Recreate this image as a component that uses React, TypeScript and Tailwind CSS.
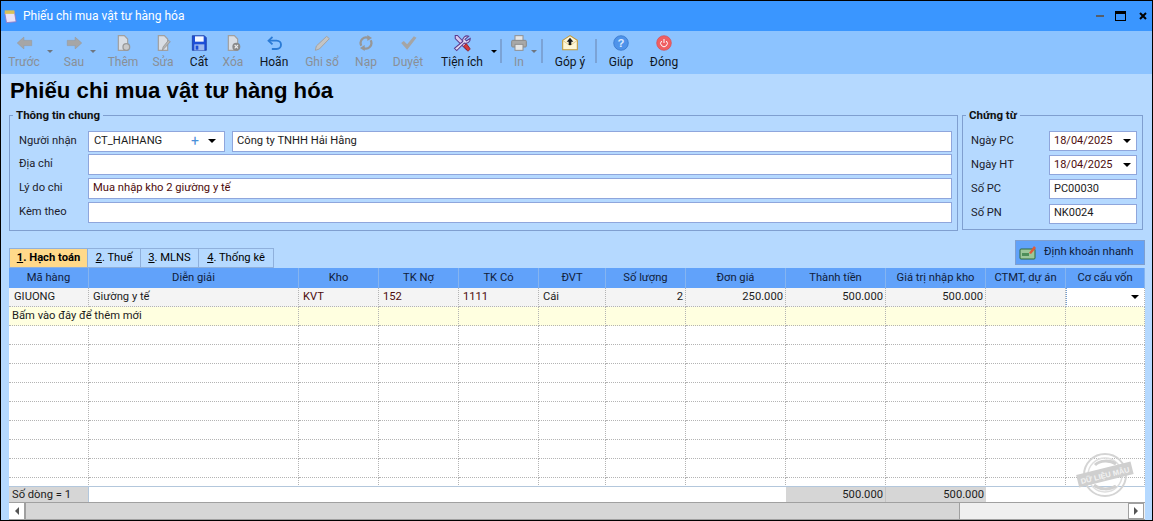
import type { ReactNode } from "react";

const GRAY = "#a6a6a6";

const IconBack = () => (
  <svg width="17" height="16" viewBox="0 0 26 24"><path d="M2 12 L12 3 V8 H24 V16 H12 V21 Z" fill={GRAY} stroke="#999" /></svg>
);
const IconNext = () => (
  <svg width="17" height="16" viewBox="0 0 26 24"><path d="M24 12 L14 3 V8 H2 V16 H14 V21 Z" fill={GRAY} stroke="#999" /></svg>
);
const Doc = () => (
  <path d="M5 1 H14 L19 6 V23 H5 Z" fill="#d8dde4" stroke="#a0a0a0" strokeWidth="1.800" />
);
const IconAdd = () => (
  <svg width="16" height="16" viewBox="0 0 24 24"><Doc /><circle cx="17" cy="18" r="5" fill="#c9c9c9" stroke="#999" strokeWidth="2" /></svg>
);
const IconEdit = () => (
  <svg width="16" height="16" viewBox="0 0 24 24"><Doc /><path d="M23 10 L14 20 L11 23 L12 18 L20 8 Z" fill="#b5b5b5" stroke="#8f8f8f" /></svg>
);
const IconSave = () => (
  <svg width="16" height="16" viewBox="0 0 24 24">
    <path d="M2 1 H20 L23 4 V23 H2 Z" fill="#1d4fd8" stroke="#14309a" />
    <rect x="6" y="2" width="13" height="8" fill="#f4f7ff" />
    <rect x="5" y="14" width="15" height="9" fill="#9db9ee" />
    <rect x="7" y="16" width="4" height="6" fill="#1d4fd8" />
  </svg>
);
const IconDelete = () => (
  <svg width="16" height="16" viewBox="0 0 24 24"><Doc /><circle cx="17" cy="17.500" r="6" fill="#8a8a8a" /><path d="M14.500 15 L19.500 20 M19.500 15 L14.500 20" stroke="#eee" strokeWidth="1.600" /></svg>
);
const IconUndo = () => (
  <svg width="17" height="16" viewBox="0 0 24 24" fill="none"><path d="M9 3 L3 8.500 L9 14" stroke="#2b7bd6" strokeWidth="2.600" /><path d="M4 8.500 H15 C24 8.500 24 21 15 21 H8" stroke="#2b7bd6" strokeWidth="2.800" /></svg>
);
const IconPencil = () => (
  <svg width="16" height="16" viewBox="0 0 24 24"><path d="M19 2 L23 5.500 L8 21 L2 23 L3.500 16.500 Z" fill="#c4c4c4" stroke="#a3a3a3" strokeWidth="1.500" /></svg>
);
const IconReload = () => (
  <svg width="16" height="16" viewBox="0 0 24 24" fill="none" stroke="#979797" strokeWidth="3.400">
    <path d="M5 16 C1 8 9 1 16 4.500" /><path d="M19 8 C23 16 15 23 8 19.500" />
    <path d="M14 0 L21 4.500 L14 9 Z M10 15 L3 19.500 L10 24 Z" fill="#979797" stroke="none" />
  </svg>
);
const IconCheck = () => (
  <svg width="17" height="16" viewBox="0 0 24 24"><path d="M1 12 L5 9 L10 14 L20 2 L24 4 L10 22 Z" fill="#a5a5a5" /></svg>
);
const IconTools = () => (
  <svg width="18" height="18" viewBox="0 0 24 24">
    <path d="M3 2 L6 2 L21 18 L18 21 L3 6 Z" fill="#d9c8ef" stroke="#5b3a8e" strokeWidth="1.400" />
    <path d="M21 3 A6 6 0 0 0 13 10 L2 19 L5 22 L15 12 A6 6 0 0 0 23 6 L18 9 L16 7 Z" fill="#e4dcf4" stroke="#5b3a8e" strokeWidth="1.400" />
    <path d="M14 16 L18 13 L23 20 L20 23 Z" fill="#d5383c" stroke="#8e1d21" />
  </svg>
);
const IconPrint = () => (
  <svg width="16" height="16" viewBox="0 0 24 24">
    <rect x="6" y="1" width="12" height="8" fill="#e6e6e6" stroke="#8f8f8f" strokeWidth="1.500" />
    <rect x="1" y="8" width="22" height="10" rx="1.500" fill="#a8a8a8" stroke="#8a8a8a" strokeWidth="1.500" />
    <rect x="6" y="14" width="12" height="9" fill="#e6e6e6" stroke="#8f8f8f" strokeWidth="1.500" />
  </svg>
);
const IconMail = () => (
  <svg width="16" height="16" viewBox="0 0 24 24">
    <path d="M1 8 L12 1 L23 8 V22 H1 Z" fill="#fdf6d8" stroke="#c49a3a" strokeWidth="1.600" />
    <path d="M1 8 L12 16 L23 8" fill="none" stroke="#d9b96a" />
    <path d="M12 4 L17 10 H14 V15 H10 V10 H7 Z" fill="#1c1c1c" />
  </svg>
);
const IconHelp = () => (
  <svg width="16" height="16" viewBox="0 0 24 24">
    <circle cx="12" cy="12" r="11" fill="#4f93ea" stroke="#2f6fc4" />
    <text x="12" y="18" textAnchor="middle" fontSize="17" fontWeight="700" fill="#dbeafe" fontFamily="Liberation Sans, sans-serif">?</text>
  </svg>
);
const IconPower = () => (
  <svg width="16" height="16" viewBox="0 0 24 24" fill="none">
    <circle cx="12" cy="12" r="11" fill="#ef5f62" stroke="#d64a4e" />
    <path d="M8.500 9 A5 5 0 1 0 15.500 9" stroke="#fff" strokeWidth="1.500" />
    <path d="M12 6 V12" stroke="#fff" strokeWidth="1.500" />
  </svg>
);

const Caret = ({ className = "" }: { className?: string }) => (
  <span className={`inline-block w-0 h-0 border-x-[4px] border-x-transparent border-t-[4px] ${className}`} />
);

type ToolProps = { label: string; icon: ReactNode; off?: boolean; w: string; caret?: string };

function Tool({ label, icon, off, w, caret }: ToolProps) {
  return (
    <div className={`relative flex flex-col items-center shrink-0 ${w}`}>
      <div className="h-[20px] mt-[2px] flex items-center justify-center">{icon}</div>
      <span className={`mt-[2px] leading-[14px] whitespace-nowrap ${off ? "text-[#8a8f96]" : "text-[#10151c]"}`}>{label}</span>
      {caret && <span className={`absolute top-[19px] w-0 h-0 border-x-[3px] border-x-transparent border-t-[3px] ${caret}`} />}
    </div>
  );
}

const Sep = ({ className = "" }: { className?: string }) => (
  <div className={`w-[2px] h-[24px] mt-[8px] bg-[#7ba3d6] shrink-0 ${className}`} />
);

function Toolbar() {
  return (
    <div className="h-[43px] bg-[#8cc3ff] flex pl-[3px] shrink-0 text-[12px]">
      <Tool w="w-[40px]" label="Trước" off icon={<IconBack />} caret="-right-[9px] border-t-[#6e7680]" />
      <Tool w="w-[40px] ml-[10px]" label="Sau" off icon={<IconNext />} caret="-right-[2px] border-t-[#6e7680]" />
      <Tool w="w-[40px] ml-[9px]" label="Thêm" off icon={<IconAdd />} />
      <Tool w="w-[40px]" label="Sửa" off icon={<IconEdit />} />
      <Tool w="w-[32px]" label="Cất" icon={<IconSave />} />
      <Tool w="w-[36px]" label="Xóa" off icon={<IconDelete />} />
      <Tool w="w-[46px]" label="Hoãn" icon={<IconUndo />} />
      <Tool w="w-[50px]" label="Ghi sổ" off icon={<IconPencil />} />
      <Tool w="w-[38px]" label="Nạp" off icon={<IconReload />} />
      <Tool w="w-[46px]" label="Duyệt" off icon={<IconCheck />} />
      <Tool w="w-[62px]" label="Tiện ích" icon={<IconTools />} caret="-right-[4px] border-t-black" />
      <Sep className="ml-[7px]" />
      <Tool w="w-[28px] ml-[3px]" label="In" off icon={<IconPrint />} caret="-right-[4px] border-t-[#6e7680]" />
      <Sep className="ml-[8px]" />
      <Tool w="w-[46px] ml-[4px]" label="Góp ý" icon={<IconMail />} />
      <Sep className="ml-[2px]" />
      <Tool w="w-[42px] ml-[3px]" label="Giúp" icon={<IconHelp />} />
      <Tool w="w-[42px] ml-[1px]" label="Đóng" icon={<IconPower />} />
    </div>
  );
}

const inputCls = "bg-white border border-[#8fa6dc] h-[21px] flex items-center px-[4px] text-[#1c1c1c] whitespace-nowrap shrink-0";
const maroon = "text-[#4d0c0c]";

function Field({ label, h = "h-[24px]", children }: { label: string; h?: string; children?: ReactNode }) {
  return (
    <div className={`flex items-center ${h}`}>
      <span className="w-[70px] pl-[1px] shrink-0 text-[#1c1c2c]">{label}</span>
      {children}
    </div>
  );
}

function GeneralInfo() {
  return (
    <fieldset className="w-[949px] h-[123px] border border-[#7f9fd0] ml-[8px] pl-[8px] pr-[5px] pt-[8px] shrink-0 min-w-0">
      <legend className="-ml-[5px] px-[3px] font-bold text-[11.500px] leading-[14px] text-[#111]">Thông tin chung</legend>
      <Field label="Người nhận" h="h-[22px]">
        <div className={`${inputCls} w-[137px] pl-[5px] pr-[8px]`}>
          <span>CT_HAIHANG</span>
          <span className="ml-auto text-[#4a90d9] text-[14px] leading-none">+</span>
          <Caret className="ml-[9px] border-t-black" />
        </div>
        <div className={`${inputCls} w-[720px] ml-[7px]`}>Công ty TNHH Hải Hằng</div>
      </Field>
      <Field label="Địa chỉ"><div className={`${inputCls} w-[864px]`} /></Field>
      <Field label="Lý do chi"><div className={`${inputCls} w-[864px] ${maroon}`}>Mua nhập kho 2 giường y tế</div></Field>
      <Field label="Kèm theo"><div className={`${inputCls} w-[864px]`} /></Field>
    </fieldset>
  );
}

function Voucher() {
  const rows: { label: string; value: string; pick: boolean; h: string }[] = [
    { label: "Ngày PC", value: "18/04/2025", pick: true, h: "h-[24px]" },
    { label: "Ngày HT", value: "18/04/2025", pick: true, h: "h-[24px]" },
    { label: "Số PC", value: "PC00030", pick: false, h: "h-[24px]" },
    { label: "Số PN", value: "NK0024", pick: false, h: "h-[25px]" },
  ];
  return (
    <fieldset className="w-[181px] h-[122px] border border-[#7f9fd0] ml-[4px] pl-[8px] pr-[5px] pt-[7px] shrink-0 min-w-0">
      <legend className="-ml-[5px] px-[3px] font-bold text-[11.500px] leading-[14px] text-[#111]">Chứng từ</legend>
      {rows.map((r) => (
        <div key={r.label} className={`flex items-center ${r.h}`}>
          <span className="w-[78px] shrink-0 text-[#1c1c2c]">{r.label}</span>
          <div className={`${inputCls} w-[88px] !h-[20px] text-[11px] ${r.pick ? maroon : ""}`}>
            <span>{r.value}</span>
            {r.pick && <Caret className="ml-auto mr-[1px] border-t-black" />}
          </div>
        </div>
      ))}
    </fieldset>
  );
}

const gridCols = "grid grid-cols-[80px_210px_80px_80px_80px_67px_80px_100px_100px_100px_80px_79px]";

const headers = ["Mã hàng", "Diễn giải", "Kho", "TK Nợ", "TK Có", "ĐVT", "Số lượng", "Đơn giá", "Thành tiền", "Giá trị nhập kho", "CTMT, dự án", "Cơ cấu vốn"];

const cellCls = "h-[19px] border-r border-b border-dotted border-[#b4b4b4] px-[4px] flex items-center whitespace-nowrap overflow-hidden";

function DataRow() {
  const right = ["2", "250.000", "500.000", "500.000", ""];
  return (
    <div className={`${gridCols} bg-[#f4f4f4]`}>
      <div className={`${cellCls} !pl-[5px]`}>GIUONG</div>
      <div className={cellCls}>Giường y tế</div>
      <div className={`${cellCls} ${maroon}`}>KVT</div>
      <div className={`${cellCls} ${maroon}`}>152</div>
      <div className={`${cellCls} ${maroon}`}>1111</div>
      <div className={cellCls}>Cái</div>
      {right.map((t, i) => <div key={i} className={`${cellCls} justify-end !pr-[2px]`}>{t}</div>)}
      <div className={`${cellCls} bg-white justify-end !pr-[5px] border-l border-l-[#6f9fd8]`}><Caret className="border-t-black" /></div>
    </div>
  );
}

function AddRow() {
  return (
    <div className={`${gridCols} bg-[#ffffe0]`}>
      <div className={`${cellCls} col-span-2 !px-[3px]`}>Bấm vào đây để thêm mới</div>
      {Array.from({ length: 10 }).map((_, i) => <div key={i} className={cellCls} />)}
    </div>
  );
}

function Grid() {
  return (
    <div className="ml-[8px] mr-[7px] relative text-[#1c1c1c]">
      <div className={`${gridCols} h-[20px] bg-[#61a2fa] text-[#10203a]`}>
        {headers.map((h) => (
          <div key={h} className="border-r border-[#85b4f0] flex items-center justify-center whitespace-nowrap">{h}</div>
        ))}
      </div>
      <div className="h-[198px] bg-white overflow-hidden">
        <DataRow />
        <AddRow />
        {Array.from({ length: 9 }).map((_, r) => (
          <div key={r} className={gridCols}>
            {Array.from({ length: 12 }).map((_, i) => <div key={i} className={cellCls} />)}
          </div>
        ))}
      </div>
      <div className={`${gridCols} h-[16px] border-t border-[#b3c7dc] bg-white`}>
        <div className="bg-[#d6d6d6] border-r border-[#b3c7dc] pl-[3px] leading-[15px]">Số dòng = 1</div>
        <div className="col-span-7" />
        <div className="bg-[#d6d6d6] border-r border-[#c4c4c4] text-right pr-[2px] leading-[15px]">500.000</div>
        <div className="bg-[#d6d6d6] text-right pr-[2px] leading-[15px]">500.000</div>
      </div>
      <div className="h-[18px] flex border-y border-[#a0a0a0] bg-[#f0f0f0]">
        <div className="w-[17px] bg-white border-r-2 border-[#a0a0a0] flex items-center justify-center">
          <span className="w-0 h-0 border-y-[4px] border-y-transparent border-r-[4px] border-r-[#555]" />
        </div>
        <div className="w-[934px] bg-[#d6d6d6] border-r border-[#a0a0a0]" />
        <div className="flex-1" />
        <div className="w-[16px] mr-[1px] bg-white border border-[#a0a0a0] flex items-center justify-center">
          <span className="w-0 h-0 border-y-[4px] border-y-transparent border-l-[4px] border-l-[#555]" />
        </div>
      </div>
      <svg className="absolute right-[11px] bottom-[22px]" width="58" height="46" viewBox="0 0 58 46" fill="none">
        <circle cx="29" cy="23" r="21" stroke="#d4d4d4" strokeWidth="2" />
        <circle cx="29" cy="23" r="17" stroke="#dedede" strokeWidth="1.500" />
        <path d="M19 13 C24 8 34 8 40 12 M18 33 C24 38 34 38 40 34" stroke="#d0d0d0" strokeWidth="3" />
        <g transform="rotate(-14 29 23)">
          <rect x="1" y="16" width="56" height="13" fill="#cfcfcf" />
          <text x="29" y="26" textAnchor="middle" fontSize="7.500" fontWeight="700" fill="#f2f2f2" fontFamily="Liberation Sans, sans-serif">DỮ LIỆU MẪU</text>
        </g>
      </svg>
    </div>
  );
}

export default function App() {
  return (
    <div className="w-[1153px] h-[521px] bg-[#b5d9ff] border border-black flex flex-col overflow-hidden font-['Roboto',sans-serif] text-[11.200px]">
      <div className="h-[30px] bg-[#3a96ff] flex items-center pl-[2px] pr-[5px] shrink-0">
        <svg width="14" height="15" viewBox="0 0 16 16">
          <path d="M2 4 L13 2 L15 14 L4 15 Z" fill="#e8e2f8" stroke="#8a78c8" />
          <rect x="2" y="1" width="11" height="4" fill="#d9c25a" />
        </svg>
        <span className="ml-[6px] text-[12px] text-white">Phiếu chi mua vật tư hàng hóa</span>
        <div className="ml-auto flex items-center">
          <span className="w-[8px] h-[2px] bg-[#555e6a]" />
          <span className="w-[11px] h-[10px] ml-[11px] border border-black border-t-[3px]" />
          <svg className="ml-[13px]" width="8" height="8" viewBox="0 0 8 8"><path d="M1 1 L7 7 M7 1 L1 7" stroke="#000" strokeWidth="2" /></svg>
        </div>
      </div>
      <Toolbar />
      <h1 className="h-[34px] pl-[9px] font-['Liberation_Sans',sans-serif] font-bold text-[22.200px] leading-[33px] text-black shrink-0">Phiếu chi mua vật tư hàng hóa</h1>
      <div className="flex shrink-0">
        <GeneralInfo />
        <Voucher />
      </div>
      <div className="flex items-end h-[37px] pl-[8px] pr-[7px] shrink-0">
        <div className="flex h-[20px]">
          <div className="w-[79px] bg-[#ffd98a] border border-[#8fb0dc] font-bold flex items-center justify-center"><span><u>1</u>. Hạch toán</span></div>
          <div className="w-[53px] border-y border-r border-[#8fb0dc] flex items-center justify-center"><span><u>2</u>. Thuế</span></div>
          <div className="w-[58px] border-y border-r border-[#8fb0dc] flex items-center justify-center"><span><u>3</u>. MLNS</span></div>
          <div className="w-[75px] border-y border-r border-[#8fb0dc] flex items-center justify-center"><span><u>4</u>. Thống kê</span></div>
        </div>
        <div className="ml-auto mb-[3px] w-[130px] h-[25px] bg-[#61a2fa] border border-[#7f9fd0] flex items-center pl-[3px] gap-[7px] whitespace-nowrap">
          <svg width="18" height="16" viewBox="0 0 18 16">
            <rect x="1" y="4" width="15" height="10" rx="1" fill="#9cc79a" stroke="#2f6b3a" />
            <rect x="3" y="8" width="7" height="3" fill="#4f8f5a" />
            <path d="M10 8 L15 1 L17 3 L12 9 Z" fill="#e05a3a" />
          </svg>
          <span className="text-[#10203a]">Định khoản nhanh</span>
        </div>
      </div>
      <Grid />
    </div>
  );
}
